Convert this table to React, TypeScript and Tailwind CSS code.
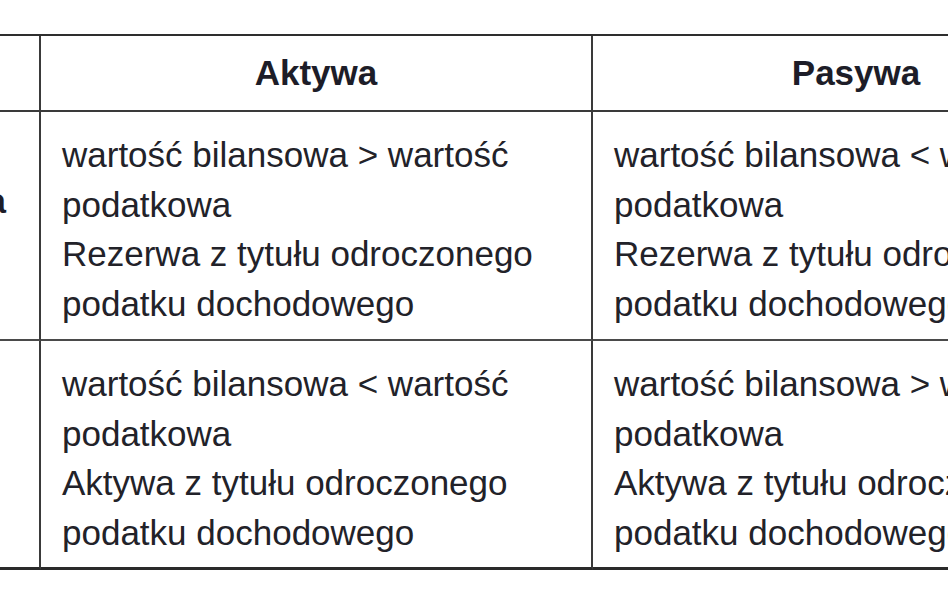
const font = { fontFamily: '"Liberation Sans", Arial, sans-serif' };

const rows = [
  {
    label: "dodatnia",
    labelPad: "pr-[33px]",
    aktywa: ["wartość bilansowa > wartość", "podatkowa", "Rezerwa z tytułu odroczonego", "podatku dochodowego"],
    pasywa: ["wartość bilansowa < wartość", "podatkowa", "Rezerwa z tytułu odroczonego", "podatku dochodowego"],
    last: false,
  },
  {
    label: "ujemna",
    labelPad: "pr-[52px]",
    aktywa: ["wartość bilansowa < wartość", "podatkowa", "Aktywa z tytułu odroczonego", "podatku dochodowego"],
    pasywa: ["wartość bilansowa > wartość", "podatkowa", "Aktywa z tytułu odroczonego", "podatku dochodowego"],
    last: true,
  },
];

const Lines = ({ lines }: { lines: string[] }) => (
  <>
    {lines.map((l, i) => (
      <div key={i} className="whitespace-nowrap">
        {l}
      </div>
    ))}
  </>
);

export default function App() {
  return (
    <div
      className="w-[948px] h-[593px] bg-white overflow-hidden pt-[34px] text-[#222229]"
      style={font}
    >
      <div className="ml-[-161px] w-[1280px] border-t-2 border-[#2e2e2e] grid grid-cols-[202px_552px_526px] text-[35px] leading-[49.5px]">
        {/* header */}
        <div className="h-[76px] border-b-2 border-r-2 border-[#3a3a3a]" />
        <div className="h-[76px] border-b-2 border-r-2 border-[#3a3a3a] flex items-center justify-center font-bold text-[#1d1d28]">
          Aktywa
        </div>
        <div className="h-[76px] border-b-2 border-[#3a3a3a] flex items-center justify-center font-bold text-[#1d1d28]">
          Pasywa
        </div>

        {rows.map((r) => {
          const b = r.last ? "border-b-[3px] border-[#2a2a2a]" : "border-b-2 border-[#4a4a4a]";
          return (
            <div key={r.label} className="contents">
              <div className={`h-[229px] border-r-2 border-r-[#3a3a3a] ${b} pt-[64px] text-right font-bold text-[#1d1d28] ${r.labelPad}`}>
                {r.label}
              </div>
              <div className={`h-[229px] border-r-2 border-r-[#3a3a3a] ${b} pt-[18px] pl-[21px]`}>
                <Lines lines={r.aktywa} />
              </div>
              <div className={`h-[229px] ${b} pt-[18px] pl-[21px]`}>
                <Lines lines={r.pasywa} />
              </div>
            </div>
          );
        })}
      </div>
    </div>
  );
}
